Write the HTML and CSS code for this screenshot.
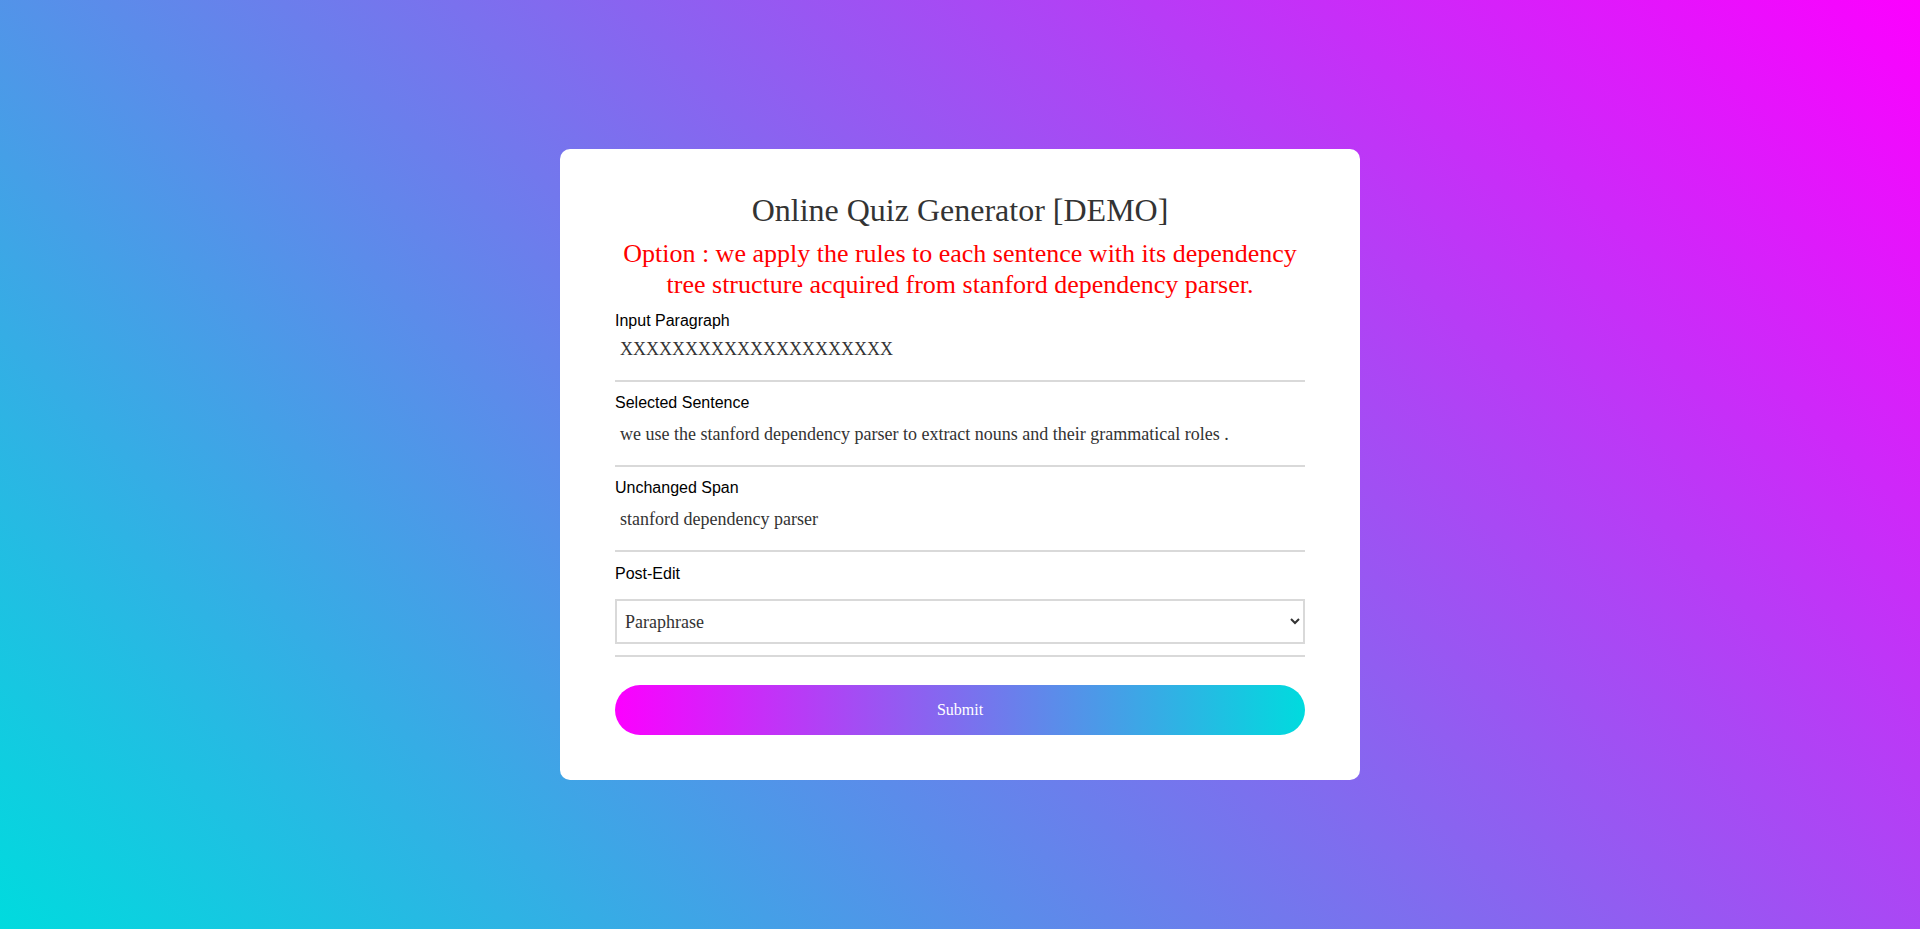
FILE: index.html
```html
<!DOCTYPE html>
<html lang="en">
<head>
<meta charset="utf-8">
<title>Online Quiz Generator [DEMO]</title>
<link rel="stylesheet" href="styles.css">
</head>
<body>
<main class="page">
  <form class="card">
    <h1 class="title">Online Quiz Generator [DEMO]</h1>
    <p class="option">Option : we apply the rules to each sentence with its dependency tree structure acquired from stanford dependency parser.</p>

    <div class="field">
      <label class="field-label">Input Paragraph</label>
      <div class="field-value field-value--first">XXXXXXXXXXXXXXXXXXXXX</div>
    </div>

    <div class="field">
      <label class="field-label">Selected Sentence</label>
      <div class="field-value">we use the stanford dependency parser to extract nouns and their grammatical roles .</div>
    </div>

    <div class="field">
      <label class="field-label">Unchanged Span</label>
      <div class="field-value">stanford dependency parser</div>
    </div>

    <div class="field field--select">
      <label class="field-label" for="postedit">Post-Edit</label>
      <select class="select" id="postedit">
        <option>Paraphrase</option>
      </select>
    </div>

    <button type="button" class="submit">Submit</button>
  </form>
</main>
</body>
</html>
```

FILE: styles.css
```css
html, body {
  margin: 0;
  padding: 0;
}

body {
  min-height: 100vh;
  background: linear-gradient(45deg, #00dbde, #fc00ff);
  font-family: "Liberation Serif", "Times New Roman", serif;
}

.page {
  min-height: 100vh;
  display: flex;
  align-items: center;
  justify-content: center;
}

.card {
  width: 800px;
  box-sizing: border-box;
  padding: 43px 55px 45px;
  background: #fff;
  border-radius: 10px;
  display: flex;
  flex-direction: column;
}

.title {
  margin: 0;
  font-family: "Liberation Serif", "Times New Roman", serif;
  font-weight: normal;
  font-size: 32px;
  line-height: 37px;
  color: #333;
  text-align: center;
}

.option {
  margin: 9px 0 0;
  font-size: 26px;
  line-height: 31px;
  color: #ff0000;
  text-align: center;
}

.field {
  display: flex;
  flex-direction: column;
  padding: 11px 0 20px;
  border-bottom: 2px solid #d9d9d9;
}

.field-label {
  font-family: "Liberation Sans", Arial, sans-serif;
  font-size: 16px;
  line-height: 20px;
  color: #000;
}

.field-value {
  margin-top: 10px;
  padding-left: 5px;
  font-size: 18px;
  line-height: 22px;
  color: #333;
}

.field-value--first {
  margin-top: 7px;
}

.field--select {
  padding-top: 12px;
  padding-bottom: 11px;
}

.select {
  margin-top: 15px;
  height: 45px;
  box-sizing: border-box;
  border: 2px solid #d9d9d9;
  border-radius: 0;
  background: #fff;
  padding: 0 4px;
  font-family: "Liberation Serif", "Times New Roman", serif;
  font-size: 18px;
  color: #333;
  outline: none;
}

.submit {
  margin-top: 28px;
  height: 50px;
  border: none;
  border-radius: 25px;
  background: linear-gradient(to right, #fc00ff, #00dbde);
  color: #fff;
  font-family: "Liberation Serif", "Times New Roman", serif;
  font-size: 16px;
  cursor: pointer;
}
```
